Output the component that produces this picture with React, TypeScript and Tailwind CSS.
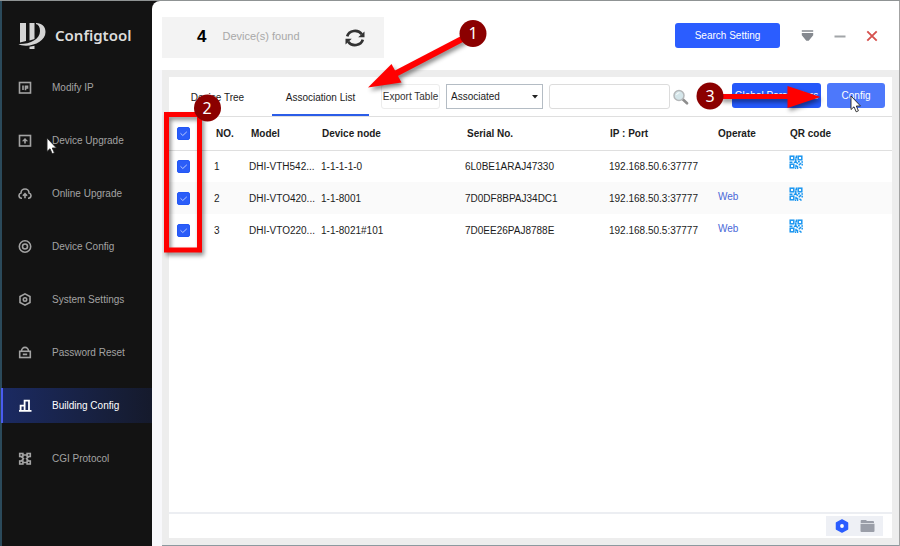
import type { ReactNode } from "react";
import clsx from "clsx";

interface Device {
  no: number;
  model: string;
  node: string;
  serial: string;
  address: string;
  web: boolean;
}

const devices: Device[] = [
  { no: 1, model: "DHI-VTH542...", node: "1-1-1-1-0", serial: "6L0BE1ARAJ47330", address: "192.168.50.6:37777", web: false },
  { no: 2, model: "DHI-VTO420...", node: "1-1-8001", serial: "7D0DF8BPAJ34DC1", address: "192.168.50.3:37777", web: true },
  { no: 3, model: "DHI-VTO220...", node: "1-1-8021#101", serial: "7D0EE26PAJ8788E", address: "192.168.50.5:37777", web: true },
];

const menu: { label: string; icon: ReactNode; active?: boolean }[] = [
  {
    label: "Modify IP",
    icon: (
      <>
        <rect x="1.5" y="1.500" width="11" height="10.500" />
        <path d="M5 4.500v4.600M7.500 9.300V5.200h2v1.800h-2" />
      </>
    ),
  },
  {
    label: "Device Upgrade",
    icon: (
      <>
        <rect x="1.5" y="1.500" width="11" height="10.500" />
        <path d="M7 9.500V6" />
        <path d="M3.900 7.200 7 4l3.100 3.200z" fill="currentColor" stroke="none" />
      </>
    ),
  },
  {
    label: "Online Upgrade",
    icon: (
      <>
        <path d="M4 11.300h-.4A2.700 2.700 0 0 1 3 6a4 4 0 0 1 8 0 2.700 2.700 0 0 1-.6 5.300H10" />
        <path d="M7 11.300V7M4.900 8.700 7 6.600l2.100 2.100" />
      </>
    ),
  },
  {
    label: "Device Config",
    icon: (
      <>
        <circle cx="7" cy="6.500" r="5.700" />
        <circle cx="7" cy="6.500" r="2.500" />
      </>
    ),
  },
  {
    label: "System Settings",
    icon: (
      <>
        <path d="M7 .9 12 3.600v5.800l-5 2.700-5-2.700V3.600z" />
        <circle cx="7" cy="6.500" r="1.700" />
      </>
    ),
  },
  {
    label: "Password Reset",
    icon: (
      <>
        <rect x="1.700" y="5.300" width="10.600" height="6.200" />
        <path d="M3.500 5.300a3.500 3.900 0 0 1 7 0M4.800 8.400h4.400" />
      </>
    ),
  },
  {
    label: "Building Config",
    active: true,
    icon: <path d="M1 11.800h12.500M2.600 11.800V6.700h4v5.100M6.600 11.800V1.700h4.400v10.100" strokeWidth="1.800" />,
  },
  {
    label: "CGI Protocol",
    icon: (
      <>
        <rect x="1.700" y="1.500" width="3.200" height="3" />
        <rect x="9.100" y="1.500" width="3.200" height="3" />
        <rect x="1.700" y="9" width="3.200" height="3" />
        <rect x="9.100" y="9" width="3.200" height="3" />
        <path d="M5 3h4M5 10.500h4M3.300 4.500l2.200 2.200L3.300 9M10.700 4.500 8.500 6.700 10.700 9" />
      </>
    ),
  },
];

function Logo() {
  return (
    <svg className="h-7 w-7" viewBox="0 0 28 28" fill="#d4d4d4" aria-hidden="true">
      <path d="M2 1h6v18l-6 1.500z" />
      <path d="M11.500 1h5v16l-5 1.500z" />
      <path d="M18 1c6 0 9.500 3.500 9.500 9C27.500 18 18 23.500 8 23.700c-3.500 0-6-.7-7.500-1.700 11 .5 21.500-4.500 21.500-13C22 5 20.500 2.500 18 2z" />
      <path d="M11.500 24.700c1.800-.2 3.400-.4 5-.9V27h-5z" />
    </svg>
  );
}

function Checkbox({ label }: { label: string }) {
  return (
    <label className="relative mx-auto block size-[13px]">
      <input
        type="checkbox"
        defaultChecked
        aria-label={label}
        className="peer block size-[13px] appearance-none rounded-xs border border-[#2458f5] checked:bg-[#2b5df8]"
      />
      <svg
        className="pointer-events-none absolute inset-0 hidden size-[13px] peer-checked:block"
        viewBox="0 0 13 13"
        fill="none"
        stroke="#b9c9ff"
      >
        <path d="M3.500 6.300 5.800 8.500 9.800 4.800" />
      </svg>
    </label>
  );
}

function QrIcon() {
  return (
    <svg className="size-[14px]" viewBox="0 0 14 14" fill="none" stroke="#1b96f0" strokeWidth="1.500">
      <rect x="1.200" y="1.200" width="3.600" height="3.600" />
      <rect x="9.200" y="1.200" width="3.600" height="3.600" />
      <rect x="1.200" y="9.200" width="3.600" height="3.600" />
      <path d="M7.500 .5v2H6.300M6.800 3.500v3.200M.5 7.300h3M4.800 7.300h2.500l1.500 1.500M9 6.800h1.800M12.300 7H14M7 9.800v1.700h1.500V14M9.800 10.300l2.200-2.200M13.200 8.800v1.700M10.500 11.700l2 1.800M6 13.200h1" />
    </svg>
  );
}

function Cursor({ className }: { className: string }) {
  return (
    <svg className={clsx("pointer-events-none absolute h-[18px] w-3", className)} viewBox="0 0 12 18">
      <path
        d="M1 1v13.500l3-2.700 2.200 5 2.200-1-2.100-4.800h4.200z"
        fill="#fff"
        stroke="#222"
        strokeWidth=".9"
      />
    </svg>
  );
}

function Sidebar() {
  return (
    <aside className="w-[152px] shrink-0 border-l-2 border-[#2b4a5b] bg-[#131313]">
      <div className="flex h-[69px] items-center gap-2 pl-4">
        <Logo />
        <span className="pl-px font-['Noto_Sans',sans-serif] text-[15px] font-semibold text-[#dcdcdc]">
          Configtool
        </span>
      </div>
      <nav className="flex flex-col gap-[18px]">
        {menu.map((item) => (
          <a
            key={item.label}
            href="#"
            className={clsx(
              "flex h-[35px] items-center gap-5",
              item.active
                ? "-ml-px border-l-2 border-[#4a5cf0] bg-linear-to-r from-[#1b2a62] to-[#151a2c] pl-[15px] text-white"
                : "pl-4 text-[#a3a3a3]"
            )}
          >
            <svg
              className="size-[14px]"
              viewBox="0 0 14 14"
              fill="none"
              stroke="currentColor"
              strokeWidth="1.600"
              aria-hidden="true"
            >
              {item.icon}
            </svg>
            <span className="whitespace-nowrap">{item.label}</span>
          </a>
        ))}
      </nav>
    </aside>
  );
}

function Header() {
  return (
    <header className="flex h-[69px] items-center pr-[21px] pl-[10px]">
      <div className="mt-1 flex h-[41px] w-[222px] items-center bg-[#f3f3f3] pr-[19px] pb-0.5 pl-[35px]">
        <strong className="text-[17px] text-black">4</strong>
        <span className="ml-4 text-[11px] text-[#a8a8a8]">Device(s) found</span>
        <button aria-label="Refresh" className="mt-0.5 ml-auto">
          <svg className="size-5" viewBox="0 0 20 20" fill="none" stroke="#333" strokeWidth="2.700">
            <path d="M2.200 8.300A8 7 0 0 1 16.800 6.200M17.800 11.700A8 7 0 0 1 3.200 13.800" />
            <path d="M19.500 3.500v5.800h-6.300zM.5 16.500v-5.800h6.300z" fill="#333" stroke="none" />
          </svg>
        </button>
      </div>
      <button className="ml-auto h-[25px] w-[105px] rounded-[3px] bg-[#2b5dff] text-white">
        Search Setting
      </button>
      <div className="ml-[21px] flex items-center gap-5">
        <button aria-label="Menu">
          <svg className="size-[13px]" viewBox="0 0 13 13" fill="#85898f">
            <path d="M.8 1.300h11.400v1.500H.8zM.8 4h11.400v2.300L7.700 11.800H5.300L.8 6.300z" />
          </svg>
        </button>
        <button aria-label="Minimize">
          <svg className="size-[12px]" viewBox="0 0 12 12" fill="#a2a5a8">
            <path d="M.5 5.500h11v2H.5z" />
          </svg>
        </button>
        <button aria-label="Close">
          <svg className="size-[12px]" viewBox="0 0 12 12" stroke="#d6524e" strokeWidth="1.900">
            <path d="M1.300 1.300l9.400 9.400M10.700 1.300l-9.400 9.400" />
          </svg>
        </button>
      </div>
    </header>
  );
}

function Toolbar() {
  return (
    <div className="flex h-10 items-center border-b border-[#dfdfdf]">
      <div className="flex gap-1.5 self-stretch pt-px">
        <button className="w-[97px]">Device Tree</button>
        <button className="w-[97px] border-b-2 border-[#2b5de8] pt-0.5">Association List</button>
      </div>
      <button className="ml-3 h-[25px] w-[59px] shrink-0 rounded-[3px] border border-[#ececec] whitespace-nowrap text-[#333]">
        Export Table
      </button>
      <div className="relative ml-1.5 w-[97px] shrink-0">
        <select
          aria-label="Association state"
          className="block h-[25px] w-full appearance-none border border-[#b4bcc4] bg-white pl-1"
        >
          <option>Associated</option>
        </select>
        <svg className="pointer-events-none absolute top-[11px] right-[5px] h-1 w-1.5" viewBox="0 0 6 4">
          <path d="M0 0h6L3 3.500z" fill="#222" />
        </svg>
      </div>
      <input
        type="text"
        aria-label="Search"
        className="ml-1.5 h-[25px] w-[121px] rounded-[3px] border border-[#dcdcdc] px-1"
      />
      <button aria-label="Find" className="ml-[3px]">
        <svg className="size-4" viewBox="0 0 16 16" fill="none">
          <path d="M10 10.500l4 3.800" stroke="#8e8e8e" strokeWidth="2.600" strokeLinecap="round" />
          <circle cx="6" cy="6.500" r="5" fill="#d5e6ea" stroke="#b5b8ba" strokeWidth="1.500" />
          <path d="M3.500 6a3 3 0 0 1 3-2.300" stroke="#fff" />
        </svg>
      </button>
      <div className="ml-auto flex gap-1.5 pr-[7px] pb-[2px] text-white">
        <button className="h-[25px] w-[89px] rounded-[3px] bg-[#2558fa] whitespace-nowrap">
          Global Parameters
        </button>
        <button className="h-[25px] w-[58px] rounded-[3px] bg-[#4d78fb]">Config</button>
      </div>
    </div>
  );
}

function DeviceTable() {
  return (
    <table className="w-full table-fixed border-collapse text-left whitespace-nowrap">
      <colgroup>
        <col className="w-[45px]" />
        <col className="w-[35px]" />
        <col className="w-[72px]" />
        <col className="w-[144px]" />
        <col className="w-[144px]" />
        <col className="w-[108px]" />
        <col className="w-[72px]" />
        <col className="w-[103px]" />
      </colgroup>
      <thead>
        <tr className="h-[33px] border-b border-[#dfdfdf]">
          <th className="pr-4">
            <Checkbox label="Select all devices" />
          </th>
          <th className="pl-0.5">NO.</th>
          <th className="pl-0.5">Model</th>
          <th className="pl-px">Device node</th>
          <th className="pl-0.5">Serial No.</th>
          <th className="pl-px">IP : Port</th>
          <th className="pl-px">Operate</th>
          <th className="pl-px">QR code</th>
        </tr>
      </thead>
      <tbody>
        {devices.map((device) => (
          <tr key={device.no} className="h-8 even:bg-[#fafafa]">
            <td className="pr-4">
              <Checkbox label={`Select device ${device.no}`} />
            </td>
            <td>{device.no}</td>
            <td>{device.model}</td>
            <td>{device.node}</td>
            <td>{device.serial}</td>
            <td>{device.address}</td>
            <td className="pb-1 pl-px">
              {device.web && (
                <a href="#" className="text-[#4a68d8]">
                  Web
                </a>
              )}
            </td>
            <td className="pb-2">
              <button aria-label="Show QR code" className="block">
                <QrIcon />
              </button>
            </td>
          </tr>
        ))}
      </tbody>
    </table>
  );
}

function Footer() {
  return (
    <footer className="mt-auto flex h-[26px] items-center justify-end border-t-2 border-[#eceef2] pr-[9px]">
      <div className="flex h-5 w-[57px] items-center justify-between bg-[#eef0f5] px-2">
        <button aria-label="Device view">
          <svg className="size-4" viewBox="0 0 16 16">
            <path d="M8 2l5.500 3v6L8 14l-5.500-3V5z" fill="#2b5dff" stroke="#2b5dff" strokeWidth="1.500" strokeLinejoin="round" />
            <circle cx="8" cy="8" r="1.900" fill="#fff" />
          </svg>
        </button>
        <button aria-label="Folder view">
          <svg className="h-[14px] w-[15px]" viewBox="0 0 15 14" fill="#9a9ea8">
            <path d="M1.500 1H6l1 1h6a1 1 0 0 1 1 1v1H.7V2a1 1 0 0 1 .8-1zM.5 4.700h14V12a1 1 0 0 1-1 1h-12a1 1 0 0 1-1-1z" />
          </svg>
        </button>
      </div>
    </footer>
  );
}

/* Numbered steps drawn over the window */
function Steps() {
  return (
    <svg
      className="pointer-events-none absolute top-0 left-0 h-[546px] w-[900px]"
      viewBox="0 1 900 546"
      fill="none"
    >
      <g className="drop-shadow-[2px_3px_2px_rgba(0,0,0,0.45)]">
        <path d="M464 38 395 74" stroke="#f00" strokeWidth="6" />
        <path d="M368 87.500 391.500 64l10 18.500z" fill="#f00" />
        <rect x="166.500" y="114.500" width="33" height="135.500" stroke="#f00" strokeWidth="5" />
        <path d="M720 96.500h70" stroke="#f00" strokeWidth="5" />
        <path d="M787.500 86v22l33-11z" fill="#f00" />
      </g>
      <g fill="#8b0000">
        <circle cx="473" cy="33.500" r="13.500" />
        <circle cx="207.500" cy="108" r="13.500" />
        <circle cx="710" cy="96" r="13.500" />
      </g>
      <g fill="#fff" textAnchor="middle" className="font-['Noto_Sans',sans-serif] text-[16px]">
        <text x="473" y="39">1</text>
        <text x="207" y="114">2</text>
        <text x="710" y="102">3</text>
      </g>
    </svg>
  );
}

export default function App() {
  return (
    <div className="relative flex min-h-screen border-t border-[#8f9394] bg-[#131313] font-['Liberation_Sans',Arial,sans-serif] text-[10px] text-[#1c1c1c]">
      <Sidebar />
      <main className="flex min-w-0 flex-1 flex-col overflow-hidden rounded-tl-lg border-r border-[#a3a3a3] bg-white">
        <Header />
        <div className="flex flex-1 bg-[#f8f8fb] pl-[10px]">
          <div className="flex min-w-0 flex-1 flex-col border-b border-[#8d999f] bg-[#ededed] p-[7px]">
            <section className="flex flex-1 flex-col bg-white">
              <Toolbar />
              <DeviceTable />
              <Footer />
            </section>
          </div>
        </div>
      </main>
      <Steps />
      <Cursor className="top-[136px] left-[46px]" />
      <Cursor className="top-[94px] left-[850px]" />
    </div>
  );
}
